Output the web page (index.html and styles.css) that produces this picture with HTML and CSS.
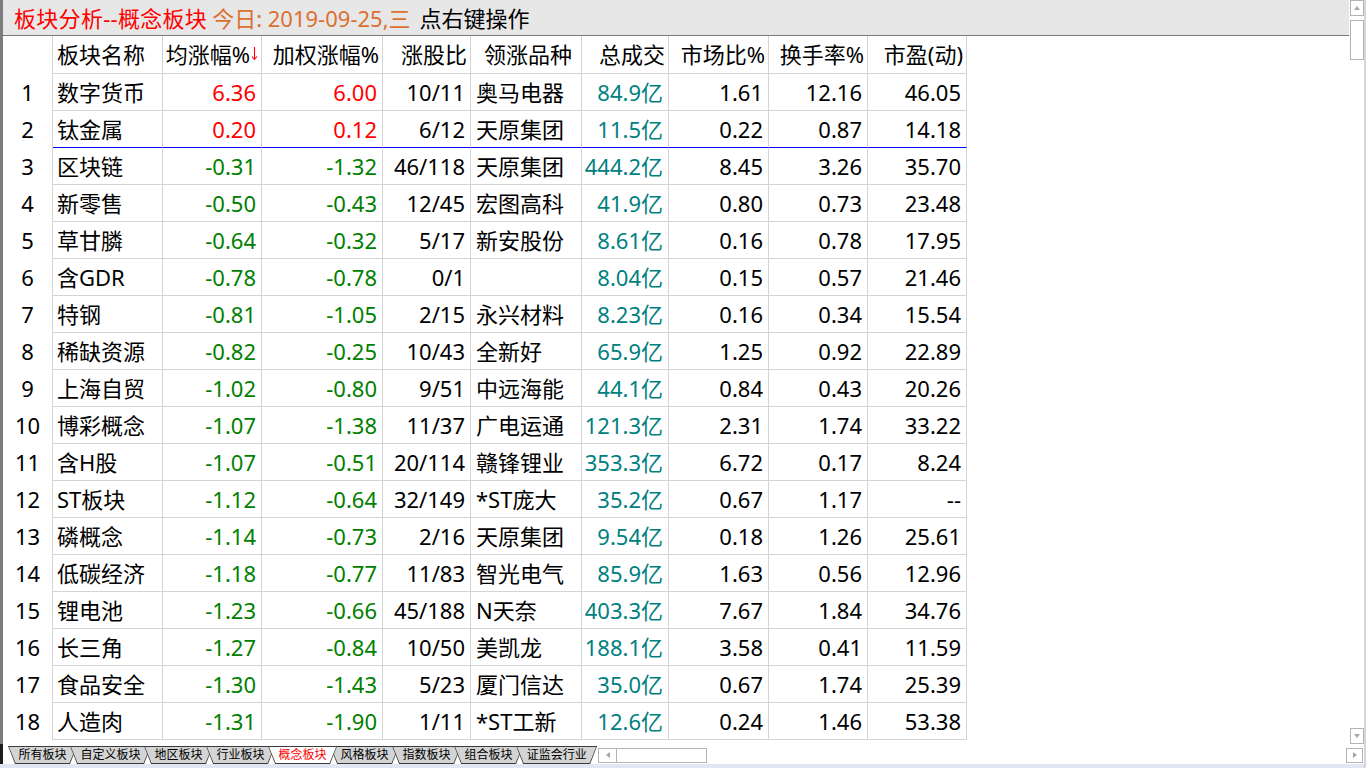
FILE: index.html
```html
<!DOCTYPE html>
<html lang="zh-CN">
  <head>
    <meta charset="utf-8" />
    <meta name="viewport" content="width=device-width, initial-scale=1.0" />

    <title>板块分析--概念板块</title>

    <link rel="stylesheet" href="styles.css">
  </head>
  <body>
    <div class="window">
      <div class="top">
        <div class="main">
          <div class="titlebar">
            <span class="title-name">板块分析--概念板块</span>
            <span class="title-date">今日: 2019-09-25,三</span>
            <span class="title-hint">点右键操作</span>
          </div>
          <div class="grid" id="grid">
            <div class="row head">
              <div class="cell idx"></div>
              <div class="cell name">板块名称</div>
              <div class="cell num">均涨幅%<svg class="sort-arrow" width="7" height="15" viewBox="0 0 7 15"><path d="M3.5 1V13.5M1 10.5l2.5 3L6 10.5" stroke="#f00" stroke-width="1.1" fill="none"/></svg></div>
              <div class="cell num">加权涨幅%</div>
              <div class="cell num">涨股比</div>
              <div class="cell lead">领涨品种</div>
              <div class="cell num">总成交</div>
              <div class="cell num">市场比%</div>
              <div class="cell num">换手率%</div>
              <div class="cell num">市盈(动)</div>
            </div>
          </div>
        </div>
        <div class="vscroll">
          <div class="sbtn"><i class="tri tri-up"></i></div>
          <div class="vthumb"></div>
          <div class="vtrack"></div>
          <div class="sbtn"><i class="tri tri-down"></i></div>
        </div>
      </div>

      <div class="bottom">
        <div class="tabs">
          <div class="tab"><span>所有板块</span></div>
          <div class="tab"><span>自定义板块</span></div>
          <div class="tab"><span>地区板块</span></div>
          <div class="tab"><span>行业板块</span></div>
          <div class="tab active"><span>概念板块</span></div>
          <div class="tab"><span>风格板块</span></div>
          <div class="tab"><span>指数板块</span></div>
          <div class="tab"><span>组合板块</span></div>
          <div class="tab"><span>证监会行业</span></div>
        </div>
        <div class="hscroll">
          <div class="hbox">
            <div class="hbtn"><i class="tri tri-left"></i></div>
            <div class="hthumb"></div>
          </div>
          <div class="hspace"></div>
          <div class="hbtn-right"><i class="tri tri-right"></i></div>
        </div>
      </div>
      <div class="strip"></div>
    </div>

    <script>
      // 板块名称, 均涨幅, 加权涨幅, 涨股比, 领涨品种, 总成交, 市场比, 换手率, 市盈
      const rows = [
        ["数字货币", "6.36", "6.00", "10/11", "奥马电器", "84.9亿", "1.61", "12.16", "46.05"],
        ["钛金属", "0.20", "0.12", "6/12", "天原集团", "11.5亿", "0.22", "0.87", "14.18"],
        ["区块链", "-0.31", "-1.32", "46/118", "天原集团", "444.2亿", "8.45", "3.26", "35.70"],
        ["新零售", "-0.50", "-0.43", "12/45", "宏图高科", "41.9亿", "0.80", "0.73", "23.48"],
        ["草甘膦", "-0.64", "-0.32", "5/17", "新安股份", "8.61亿", "0.16", "0.78", "17.95"],
        ["含GDR", "-0.78", "-0.78", "0/1", "", "8.04亿", "0.15", "0.57", "21.46"],
        ["特钢", "-0.81", "-1.05", "2/15", "永兴材料", "8.23亿", "0.16", "0.34", "15.54"],
        ["稀缺资源", "-0.82", "-0.25", "10/43", "全新好", "65.9亿", "1.25", "0.92", "22.89"],
        ["上海自贸", "-1.02", "-0.80", "9/51", "中远海能", "44.1亿", "0.84", "0.43", "20.26"],
        ["博彩概念", "-1.07", "-1.38", "11/37", "广电运通", "121.3亿", "2.31", "1.74", "33.22"],
        ["含H股", "-1.07", "-0.51", "20/114", "赣锋锂业", "353.3亿", "6.72", "0.17", "8.24"],
        ["ST板块", "-1.12", "-0.64", "32/149", "*ST庞大", "35.2亿", "0.67", "1.17", "--"],
        ["磷概念", "-1.14", "-0.73", "2/16", "天原集团", "9.54亿", "0.18", "1.26", "25.61"],
        ["低碳经济", "-1.18", "-0.77", "11/83", "智光电气", "85.9亿", "1.63", "0.56", "12.96"],
        ["锂电池", "-1.23", "-0.66", "45/188", "N天奈", "403.3亿", "7.67", "1.84", "34.76"],
        ["长三角", "-1.27", "-0.84", "10/50", "美凯龙", "188.1亿", "3.58", "0.41", "11.59"],
        ["食品安全", "-1.30", "-1.43", "5/23", "厦门信达", "35.0亿", "0.67", "1.74", "25.39"],
        ["人造肉", "-1.31", "-1.90", "1/11", "*ST工新", "12.6亿", "0.24", "1.46", "53.38"],
      ];

      function tone(value) {
        return value.charAt(0) === "-" ? "fall" : "rise";
      }

      const grid = document.getElementById("grid");
      rows.forEach(function (r, i) {
        const row = document.createElement("div");
        // blue line marks the last rising sector
        row.className = i === 1 ? "row divider" : "row";
        row.innerHTML =
          '<div class="cell idx">' + (i + 1) + "</div>" +
          '<div class="cell name">' + r[0] + "</div>" +
          '<div class="cell num ' + tone(r[1]) + '">' + r[1] + "</div>" +
          '<div class="cell num ' + tone(r[2]) + '">' + r[2] + "</div>" +
          '<div class="cell num">' + r[3] + "</div>" +
          '<div class="cell lead">' + r[4] + "</div>" +
          '<div class="cell num amount">' + r[5] + "</div>" +
          '<div class="cell num">' + r[6] + "</div>" +
          '<div class="cell num">' + r[7] + "</div>" +
          '<div class="cell num">' + r[8] + "</div>";
        grid.appendChild(row);
      });
    </script>
  </body>
</html>
```

FILE: styles.css
```css
html,
body {
  margin: 0;
  height: 100%;
}

body {
  font-family: "Noto Sans", "Noto Sans CJK SC", sans-serif;
  background: #fff;
  color: #000;
  overflow: hidden;
}

.window {
  height: 768px;
  display: flex;
  flex-direction: column;
  border-right: 2px solid #d6d6d6;
  box-sizing: border-box;
}

/* ---- top: title + grid + vertical scrollbar ---- */

.top {
  height: 744px;
  display: flex;
  border-left: 3px solid #7c7c7c;
}

.main {
  flex: 1;
  min-width: 0;
}

.titlebar {
  height: 35px;
  background: #e7e7e7;
  border-bottom: 1px solid #7a7a7a;
  display: flex;
  align-items: center;
  padding-left: 11px;
  font-size: 22px;
  line-height: 1;
  white-space: nowrap;
}

.title-name {
  color: #ff0000;
  letter-spacing: 0.3px;
}

.title-date {
  color: #dd6f30;
  margin-left: 5px;
}

.title-hint {
  margin-left: 9px;
}

.row {
  display: grid;
  grid-template-columns: 50px 110px 99px 121px 88px 111px 87px 100px 99px 99px;
  height: 37px;
}

.row.head {
  height: 38px;
}

.cell {
  box-sizing: border-box;
  border-right: 1px solid #d4d4d4;
  border-bottom: 1px solid #d4d4d4;
  display: flex;
  align-items: center;
  font-size: 22px;
  line-height: 1.2;
  white-space: nowrap;
  overflow: hidden;
}

.cell.idx {
  border-bottom: none;
  justify-content: center;
}

.cell.name {
  padding-left: 4px;
}

.cell.lead {
  padding-left: 5px;
}

.cell.num {
  justify-content: flex-end;
  padding-right: 5px;
}

.head .cell.num {
  padding-right: 3px;
}

.head .cell.lead {
  justify-content: center;
  padding-left: 4px;
}

.sort-arrow {
  margin-left: 1px;
  margin-bottom: 3px;
}

.row.divider .cell:not(.idx) {
  border-bottom-color: #0000ff;
}

.rise {
  color: #ff0000;
}

.fall {
  color: #008000;
}

.amount {
  color: #008080;
}

.vscroll {
  width: 15px;
  display: flex;
  flex-direction: column;
}

.sbtn {
  width: 14px;
  height: 16px;
  margin-left: 1px;
  box-sizing: border-box;
  border: 1px solid #b3b3b3;
  display: flex;
  align-items: center;
  justify-content: center;
}

.vthumb {
  width: 14px;
  height: 40px;
  margin: 4px 0 0 1px;
  box-sizing: border-box;
  border: 1px solid #b3b3b3;
}

.vtrack {
  flex: 1;
}

.tri {
  width: 0;
  height: 0;
  border: 3px solid transparent;
}

.tri-up {
  border-top: 0;
  border-bottom: 4px solid #a6a6a6;
}

.tri-down {
  border-bottom: 0;
  border-top: 4px solid #a6a6a6;
}

.tri-left {
  border-left: 0;
  border-right: 4px solid #a6a6a6;
}

.tri-right {
  border-right: 0;
  border-left: 4px solid #a6a6a6;
}

/* ---- bottom: sheet tabs + horizontal scrollbar ---- */

.bottom {
  height: 20px;
  display: flex;
  border-left: 3px solid #1e1e1e;
}

.tabs {
  display: flex;
  padding-left: 5px;
  padding-top: 2px;
}

.tab {
  position: relative;
  height: 18px;
  margin-left: -7px;
  padding: 1px 1px 1px;
  box-sizing: border-box;
  background: #3a3a3a;
  clip-path: polygon(0 0, 100% 0, calc(100% - 7px) 100%, 7px 100%);
}

.tab:first-child {
  margin-left: 0;
}

.tab span {
  display: block;
  height: 16px;
  line-height: 16px;
  padding: 0 9.5px;
  font-size: 12px;
  background: #d4d4d4;
  clip-path: polygon(0 0, 100% 0, calc(100% - 6.5px) 100%, 6.5px 100%);
}

.tab.active {
  z-index: 1;
}

.tab.active span {
  background: #fff;
  color: #ff0000;
}

.hscroll {
  flex: 1;
  display: flex;
  align-items: center;
  margin-left: 1px;
  margin-right: 1px;
  padding-top: 2px;
}

.hbox {
  display: flex;
  height: 15px;
  box-sizing: border-box;
  border: 1px solid #b3b3b3;
}

.hbtn {
  width: 17px;
  border-right: 1px solid #b3b3b3;
  display: flex;
  align-items: center;
  justify-content: center;
}

.hthumb {
  width: 89px;
}

.hspace {
  flex: 1;
}

.hbtn-right {
  width: 17px;
  height: 15px;
  box-sizing: border-box;
  border: 1px solid #b3b3b3;
  display: flex;
  align-items: center;
  justify-content: center;
}

.strip {
  height: 4px;
  background: #dfe8f2;
}
```
